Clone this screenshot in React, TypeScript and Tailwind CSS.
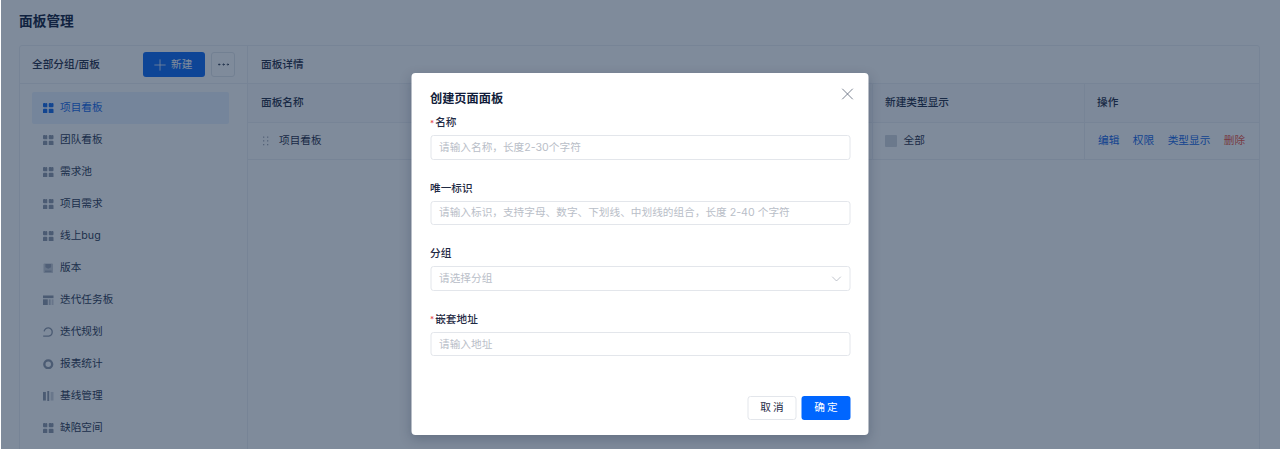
import React from "react";
import { X, ChevronDown, Plus, Ellipsis } from "lucide-react";

const font = { fontFamily: '"Inter","Noto Sans CJK SC",sans-serif' };

function GridIcon({ active }: { active?: boolean }) {
  const c = active ? "#1366e8" : "#8f97a8";
  return (
    <svg width="10.5" height="10.5" viewBox="0 0 11 11" fill={c} className="shrink-0">
      <path d="M0 1a1 1 0 0 1 1-1h1.2l.5.6.5-.6h.3a1 1 0 0 1 1 1v3.5h-3.5a1 1 0 0 1-1-1z" />
      <path d="M6 1a1 1 0 0 1 1-1h1.2l.5.6.5-.6h.8a1 1 0 0 1 1 1v2.5a1 1 0 0 1-1 1H7a1 1 0 0 1-1-1z" />
      <path d="M0 7a1 1 0 0 1 1-1h2.5a1 1 0 0 1 1 1v3a1 1 0 0 1-1 1H1a1 1 0 0 1-1-1z" />
      <path d="M6 7a1 1 0 0 1 1-1h3a1 1 0 0 1 1 1v3a1 1 0 0 1-1 1H7a1 1 0 0 1-1-1z" />
    </svg>
  );
}

function BoxIcon() {
  return (
    <svg width="10.5" height="10.5" viewBox="0 0 11 11" className="shrink-0">
      <rect x="0.5" y="0.5" width="10" height="10" rx="1" fill="#c8ccd6" />
      <path d="M2.5 1v3.5L5.5 6l3-1.5V1z" fill="#98a0b0" />
      <rect x="2" y="8" width="7" height="1.2" fill="#98a0b0" />
    </svg>
  );
}

function BoardIcon() {
  return (
    <svg width="10.5" height="10.5" viewBox="0 0 11 11" className="shrink-0">
      <rect x="0" y="0.5" width="11" height="2.8" fill="#8f97a8" />
      <rect x="0" y="4.5" width="5" height="6" fill="#8f97a8" />
      <rect x="6" y="4.5" width="2" height="6" fill="#b6bbc8" />
      <rect x="9" y="4.5" width="2" height="6" fill="#ccd0da" />
    </svg>
  );
}

function LoopIcon() {
  return (
    <svg width="10.5" height="10.5" viewBox="0 0 11 11" fill="none" className="shrink-0">
      <path d="M1.2 4.6a4.2 4.2 0 1 1 8.4 1A4 4 0 0 1 6 9.5H0.2" stroke="#8f97a8" strokeWidth="1.4" />
    </svg>
  );
}

function RingIcon() {
  return (
    <svg width="10.5" height="10.5" viewBox="0 0 11 11" fill="none" className="shrink-0">
      <circle cx="5.5" cy="5.5" r="4.1" stroke="#8f97a8" strokeWidth="2.5" />
    </svg>
  );
}

function BarsIcon() {
  return (
    <svg width="10.5" height="10.5" viewBox="0 0 11 11" className="shrink-0">
      <rect x="0" y="1" width="3" height="9" fill="#8f97a8" />
      <rect x="4.5" y="0" width="2" height="11" fill="#8f97a8" />
      <rect x="8" y="1" width="3" height="9" fill="#d0d4dc" />
    </svg>
  );
}

const items: { label: string; icon: React.ReactNode; active?: boolean }[] = [
  { label: "项目看板", icon: <GridIcon active />, active: true },
  { label: "团队看板", icon: <GridIcon /> },
  { label: "需求池", icon: <GridIcon /> },
  { label: "项目需求", icon: <GridIcon /> },
  { label: "线上bug", icon: <GridIcon /> },
  { label: "版本", icon: <BoxIcon /> },
  { label: "迭代任务板", icon: <BoardIcon /> },
  { label: "迭代规划", icon: <LoopIcon /> },
  { label: "报表统计", icon: <RingIcon /> },
  { label: "基线管理", icon: <BarsIcon /> },
  { label: "缺陷空间", icon: <GridIcon /> },
];

function Field({ label, required, placeholder, select }: { label: string; required?: boolean; placeholder: string; select?: boolean }) {
  return (
    <div className="h-[65.6px] shrink-0">
      <div className="h-[15px] pt-[2px] flex items-center text-[10.67px] leading-[15px] text-[#1f2a44] font-medium">
        {required && <span className="text-[#e5484d] text-[8px] leading-none mr-[1px]">*</span>}
        {label}
      </div>
      <div className="mt-[6px] h-[24.5px] rounded-[3px] border border-[#e3e6eb] flex items-center justify-between pl-[8px] pr-[4.5px] pt-[1px] text-[10.67px] text-[#b9bec8] bg-white">
        <span>{placeholder}</span>
        {select && <ChevronDown size={16} strokeWidth={1} color="#a0a6b2" />}
      </div>
    </div>
  );
}

export default function App() {
  return (
    <div style={font} className="relative h-[449px] w-[1280px] overflow-hidden bg-white text-[#1f2a44]">
      <div className="pl-[19px] pr-[20px]">
        <div className="h-[45px] pt-[12px] text-[13.7px] leading-[19px] font-semibold text-[#111c3a]">面板管理</div>
        <div className="flex h-[410px] rounded-t-[3px] border border-[#eef0f4]">
          <aside className="w-[228px] shrink-0 border-r border-[#eef0f4]">
            <div className="h-[38px] flex items-center pl-[12px] pr-[12px] border-b border-[#eef0f4]">
              <span className="text-[10.67px] font-medium flex-1">全部分组/面板</span>
              <button className="w-[62px] h-[25px] rounded-[3px] bg-[#0a66f5] text-white text-[10.67px] flex items-center justify-start pl-[8px] gap-[2px]">
                <Plus size={18} strokeWidth={1} />
                新建
              </button>
              <button className="ml-[6px] w-[24px] h-[25px] rounded-[3px] border border-[#e3e6eb] flex items-center justify-center bg-white">
                <Ellipsis size={15} strokeWidth={1.5} color="#2f3a50" />
              </button>
            </div>
            <ul className="pt-[8px] pl-[12px] pr-[18px] text-[10.67px]">
              {items.map((it) => (
                <li
                  key={it.label}
                  className={
                    "h-[32px] flex items-center gap-[6.5px] pl-[11px] rounded-[2px] " +
                    (it.active ? "bg-[#e9f1ff] text-[#1366e8]" : "text-[#2b3650]")
                  }
                >
                  {it.icon}
                  <span>{it.label}</span>
                </li>
              ))}
            </ul>
          </aside>
          <section className="flex-1 min-w-0">
            <div className="h-[38px] flex items-center pl-[13px] text-[10.67px] font-medium border-b border-[#eef0f4]">面板详情</div>
            <div className="flex h-[38.5px] items-center text-[10.67px] font-medium bg-[#fafbfc] border-b border-[#eef0f4]">
              <div className="w-[624px] pl-[13px] h-full flex items-center">面板名称</div>
              <div className="w-[212px] pl-[12px] h-full flex items-center border-l border-[#eef0f4]">新建类型显示</div>
              <div className="flex-1 pl-[12px] h-full flex items-center border-l border-[#eef0f4]">操作</div>
            </div>
            <div className="flex h-[37.5px] items-center text-[10.67px] border-b border-[#eef0f4]">
              <div className="w-[624px] pl-[13px] h-full flex items-center gap-[9px]">
                <svg width="8" height="10" viewBox="0 0 8 10" fill="#a3a9b6" className="shrink-0 ml-[1px]">
                  <rect x="1" y="0.5" width="1.3" height="1.3" />
                  <rect x="5" y="0.5" width="1.3" height="1.3" />
                  <rect x="1" y="4.2" width="1.3" height="1.3" />
                  <rect x="5" y="4.2" width="1.3" height="1.3" />
                  <rect x="1" y="8" width="1.3" height="1.3" />
                  <rect x="5" y="8" width="1.3" height="1.3" />
                </svg>
                <span>项目看板</span>
              </div>
              <div className="w-[212px] pl-[12px] h-full flex items-center gap-[6.5px] border-l border-[#eef0f4]">
                <span className="w-[12px] h-[12px] rounded-[1px] bg-[#d3d7df]" />
                <span>全部</span>
              </div>
              <div className="flex-1 pl-[13px] h-full flex items-center gap-[13.5px] border-l border-[#eef0f4] text-[#0f62e6]">
                <span>编辑</span>
                <span>权限</span>
                <span>类型显示</span>
                <span className="text-[#f0503c]">删除</span>
              </div>
            </div>
          </section>
        </div>
      </div>

      <div className="absolute inset-0 left-px bg-[rgba(18,40,70,0.54)] flex justify-center pt-[73px]">
        <div className="relative w-[457px] h-[362px] rounded-[4px] bg-white shadow-[0_4px_12px_rgba(20,30,60,0.25)] px-[18.5px] -translate-x-[0.5px]">
          <div className="h-[41px] pt-[16px] text-[12.2px] leading-[20px] font-semibold text-[#111c3a]">创建页面面板</div>
          <button className="absolute right-[11px] top-[11px] text-[#5e6779]">
            <X size={20} strokeWidth={1} />
          </button>
          <Field required label="名称" placeholder="请输入名称，长度2-30个字符" />
          <Field label="唯一标识" placeholder="请输入标识，支持字母、数字、下划线、中划线的组合，长度 2-40 个字符" />
          <Field label="分组" placeholder="请选择分组" select />
          <Field required label="嵌套地址" placeholder="请输入地址" />
          <div className="absolute right-[18px] bottom-[15px] flex gap-[5px] text-[10.67px]">
            <button className="w-[49px] h-[24.5px] rounded-[3px] border border-[#e3e6eb] bg-white text-[#1f2a44] tracking-[2px] pl-[2px]">取消</button>
            <button className="w-[49px] h-[24.5px] rounded-[3px] bg-[#0066ff] text-white tracking-[2px] pl-[2px]">确定</button>
          </div>
        </div>
      </div>
    </div>
  );
}
